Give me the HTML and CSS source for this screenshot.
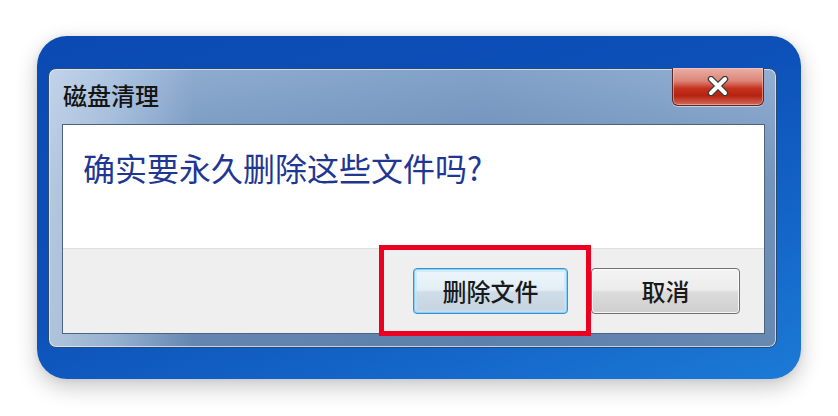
FILE: index.html
```html
<!DOCTYPE html>
<html lang="zh-CN">
<head>
<meta charset="utf-8">
<title>磁盘清理</title>
<link rel="stylesheet" href="styles.css">
</head>
<body>
<div class="stage">
  <div class="card">
    <div class="window">
      <div class="titlebar">
        <div class="title">磁盘清理</div>
        <div class="close">
          <svg width="22" height="20" viewBox="0 0 22 20">
            <path d="M4 3 L18 17 M18 3 L4 17" stroke="#3a3a3a" stroke-width="6.5" stroke-linecap="round" fill="none"/>
            <path d="M4 3 L18 17 M18 3 L4 17" stroke="#ffffff" stroke-width="4" stroke-linecap="round" fill="none"/>
          </svg>
        </div>
      </div>
      <div class="client">
        <div class="message">确实要永久删除这些文件吗?</div>
        <div class="footer">
          <button class="btn btn-default">删除文件</button>
          <button class="btn">取消</button>
          <div class="highlight"></div>
        </div>
      </div>
    </div>
  </div>
</div>
</body>
</html>
```
FILE: styles.css
```css
html, body {
  margin: 0;
  padding: 0;
  background: #ffffff;
}
body {
  width: 838px;
  height: 416px;
  overflow: hidden;
  font-family: "Noto Sans CJK SC", "Noto Sans", sans-serif;
}
.stage {
  padding: 36px 0 0 37px;
}
.card {
  width: 764px;
  height: 343px;
  box-sizing: border-box;
  padding: 32px 24px 31px 11px;
  border-radius: 30px;
  background: linear-gradient(160deg, #0b4ab3 0%, #0c50b8 45%, #1466c8 75%, #1c7ad6 100%);
  box-shadow: 0 8px 22px rgba(0, 0, 0, 0.22), 0 0 6px rgba(0,0,0,0.08);
}
.window {
  width: 729px;
  height: 280px;
  box-sizing: border-box;
  border: 1px solid #2c4a72;
  border-radius: 8px;
  background:
    linear-gradient(to right, rgba(225,235,248,0.6) 0%, rgba(200,218,240,0.5) 9%, rgba(255,255,255,0) 20%),
    linear-gradient(to right, rgba(0,0,0,0) 0%, rgba(40,80,140,0.15) 60%, rgba(0,0,0,0) 100%),
    linear-gradient(to bottom, #93b0d3 0%, #7494bb 40%, #6688b1 100%);
  box-shadow: inset 0 0 0 1px rgba(220,232,246,0.8);
  display: flex;
  flex-direction: column;
  padding: 0 11px 13px 13px;
}
.titlebar {
  height: 55px;
  display: flex;
  align-items: flex-start;
  justify-content: space-between;
}
.title {
  margin-top: 11px;
  margin-left: 1px;
  font-size: 24px;
  line-height: 30px;
  font-weight: 500;
  color: #141414;
}
.close {
  width: 92px;
  height: 38px;
  margin-top: -1px;
  margin-right: 1px;
  box-sizing: border-box;
  border: 1px solid #5a2a24;
  border-top: none;
  border-radius: 0 0 6px 6px;
  background: linear-gradient(to bottom, #e9b0a6 0%, #dc8578 35%, #c6321e 55%, #b52310 75%, #d46a5c 100%);
  box-shadow: inset 0 0 0 1px rgba(255,210,200,0.5), 0 1px 0 rgba(230,240,250,0.6);
  display: flex;
  align-items: center;
  justify-content: center;
}
.close svg {
  display: block;
  margin-top: -2px;
}
.client {
  flex: 1;
  border: 1px solid #4d6380;
  background: #ffffff;
  display: flex;
  flex-direction: column;
}
.message {
  height: 123px;
  box-sizing: border-box;
  padding: 21px 0 0 20px;
  font-size: 32px;
  line-height: 42px;
  color: #1f3793;
}
.footer {
  flex: 1;
  position: relative;
  background: #efeff0;
  border-top: 1px solid #dfdfdf;
  display: flex;
  justify-content: flex-end;
  align-items: flex-start;
  padding: 19px 24px 0 0;
  gap: 23px;
}
.btn {
  height: 46px;
  width: 149px;
  box-sizing: border-box;
  border: 1px solid #707070;
  border-radius: 4px;
  background: linear-gradient(to bottom, #f4f4f4 0%, #ececec 48%, #dcdcdc 52%, #cfcfcf 100%);
  box-shadow: inset 0 0 0 1px rgba(255,255,255,0.8);
  font-family: "Noto Sans CJK SC", sans-serif;
  font-size: 24px;
  font-weight: 500;
  color: #1a1a1a;
  padding: 0;
  line-height: 44px;
}
.btn-default {
  width: 155px;
  border-color: #3c8fcc;
  box-shadow: inset 0 0 0 1px #8ed0f5, inset 0 0 0 3px rgba(190,230,252,0.6);
  background: linear-gradient(to bottom, #eef6fb 0%, #e2eef6 48%, #cfdde8 52%, #c4d3df 100%);
}
.highlight {
  position: absolute;
  left: 316px;
  top: -4px;
  width: 212px;
  height: 91px;
  box-sizing: border-box;
  border: 5px solid #ec0020;
}
```
